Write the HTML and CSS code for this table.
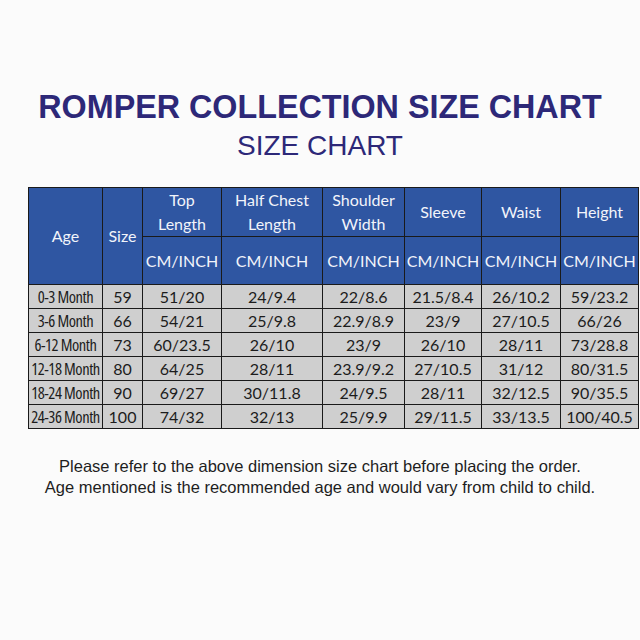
FILE: index.html
```html
<!DOCTYPE html>
<html>
<head>
<meta charset="utf-8">
<link rel="stylesheet" href="styles.css">
</head>
<body>
<div class="page">
  <h1 class="title">ROMPER COLLECTION SIZE CHART</h1>
  <h2 class="subtitle">SIZE CHART</h2>
  <table class="chart">
    <colgroup>
      <col class="c-age"><col class="c-size"><col class="c-top"><col class="c-half"><col class="c-shoulder"><col class="c-sleeve"><col class="c-waist"><col class="c-height">
    </colgroup>
    <thead>
      <tr class="h1">
        <th rowspan="2">Age</th>
        <th rowspan="2">Size</th>
        <th>Top<br>Length</th>
        <th>Half Chest<br>Length</th>
        <th>Shoulder<br>Width</th>
        <th>Sleeve</th>
        <th>Waist</th>
        <th>Height</th>
      </tr>
      <tr class="h2">
        <th>CM/INCH</th><th>CM/INCH</th><th>CM/INCH</th><th>CM/INCH</th><th>CM/INCH</th><th>CM/INCH</th>
      </tr>
    </thead>
    <tbody>
      <tr><td class="age">0-3 Month</td><td>59</td><td>51/20</td><td>24/9.4</td><td>22/8.6</td><td>21.5/8.4</td><td>26/10.2</td><td>59/23.2</td></tr>
      <tr><td class="age">3-6 Month</td><td>66</td><td>54/21</td><td>25/9.8</td><td>22.9/8.9</td><td>23/9</td><td>27/10.5</td><td>66/26</td></tr>
      <tr><td class="age">6-12 Month</td><td>73</td><td>60/23.5</td><td>26/10</td><td>23/9</td><td>26/10</td><td>28/11</td><td>73/28.8</td></tr>
      <tr><td class="age">12-18 Month</td><td>80</td><td>64/25</td><td>28/11</td><td>23.9/9.2</td><td>27/10.5</td><td>31/12</td><td>80/31.5</td></tr>
      <tr><td class="age">18-24 Month</td><td>90</td><td>69/27</td><td>30/11.8</td><td>24/9.5</td><td>28/11</td><td>32/12.5</td><td>90/35.5</td></tr>
      <tr><td class="age">24-36 Month</td><td>100</td><td>74/32</td><td>32/13</td><td>25/9.9</td><td>29/11.5</td><td>33/13.5</td><td>100/40.5</td></tr>
    </tbody>
  </table>
  <p class="note">Please refer to the above dimension size chart before placing the order.<br>Age mentioned is the recommended age and would vary from child to child.</p>
</div>
</body>
</html>
```
FILE: styles.css
```css
html, body {
  margin: 0;
  padding: 0;
  background: #fbfbfb;
}
.page {
  width: 640px;
  height: 640px;
  display: flex;
  flex-direction: column;
  align-items: center;
  padding-top: 89px;
  box-sizing: border-box;
}
.title {
  margin: 0;
  font-family: "Liberation Sans", Arial, sans-serif;
  font-weight: bold;
  font-size: 32.3px;
  line-height: 36px;
  color: #2d2878;
}
.subtitle {
  margin: 5px 0 0 0;
  font-family: "Liberation Sans", Arial, sans-serif;
  font-weight: normal;
  font-size: 28px;
  line-height: 32px;
  color: #2d2878;
}
.chart {
  margin-top: 25px;
  margin-left: 28px;
  align-self: flex-start;
  border-collapse: collapse;
  table-layout: fixed;
  width: 610px;
  font-family: Lato, "Open Sans", sans-serif;
  font-size: 16px;
  text-align: center;
}
.c-age { width: 74px; }
.c-size { width: 40px; }
.c-top { width: 79px; }
.c-half { width: 101px; }
.c-shoulder { width: 82px; }
.c-sleeve { width: 77px; }
.c-waist { width: 79px; }
.c-height { width: 78px; }
.chart th, .chart td {
  border: 1.5px solid #1a1a1a;
  padding: 0;
  white-space: nowrap;
}
.chart th {
  background: #2f56a2;
  color: #f2f4fa;
  font-weight: normal;
  line-height: 24px;
}
.h1 th { height: 48px; }
.h2 th { height: 47px; }
.chart td {
  background: #cfcfcf;
  color: #1c1c1c;
  height: 23px;
  line-height: 23px;
}
.chart td.age {
  font-family: "Open Sans", Lato, sans-serif;
  font-stretch: 75%;
  font-size: 16.5px;
  letter-spacing: -0.45px;
}
.note {
  margin: 27px 0 0 0;
  font-family: "Liberation Sans", Arial, sans-serif;
  font-size: 16.5px;
  line-height: 21px;
  color: #1e1e1e;
  text-align: center;
}
```
